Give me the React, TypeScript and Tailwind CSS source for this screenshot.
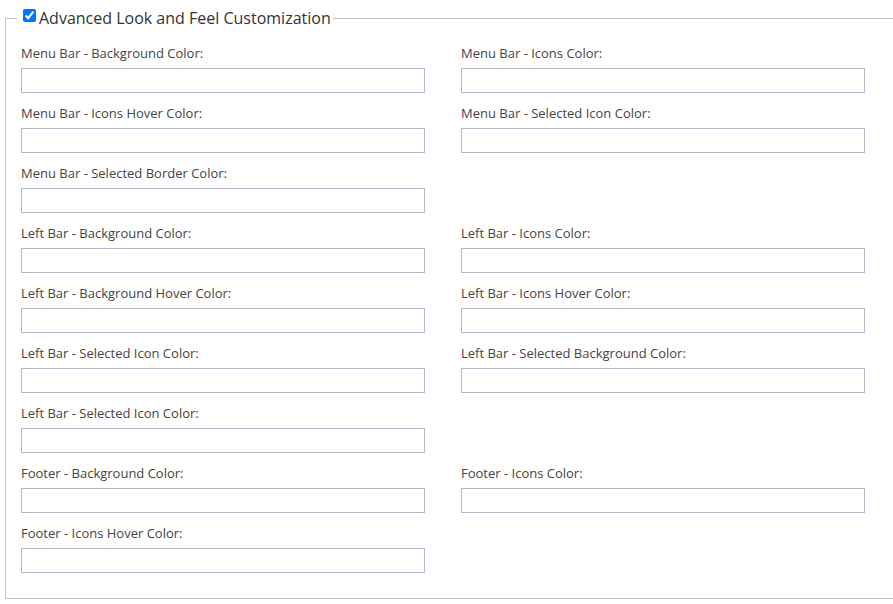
import { useState } from 'react';

const fields: (string | null)[][] = [
  ['Menu Bar - Background Color:', 'Menu Bar - Icons Color:'],
  ['Menu Bar - Icons Hover Color:', 'Menu Bar - Selected Icon Color:'],
  ['Menu Bar - Selected Border Color:', null],
  ['Left Bar - Background Color:', 'Left Bar - Icons Color:'],
  ['Left Bar - Background Hover Color:', 'Left Bar - Icons Hover Color:'],
  ['Left Bar - Selected Icon Color:', 'Left Bar - Selected Background Color:'],
  ['Left Bar - Selected Icon Color:', null],
  ['Footer - Background Color:', 'Footer - Icons Color:'],
  ['Footer - Icons Hover Color:', null],
];

const ColorField = ({ label }: { label: string }) => (
  <div className="flex flex-col">
    <label className="block text-[13px] leading-[18px] text-[#444] mb-[6px]">
      {label}
    </label>
    <input
      type="text"
      className="w-[404px] h-[25px] border border-[#b7b7cb] bg-white outline-none"
    />
  </div>
);

const App = () => {
  const [advanced, setAdvanced] = useState(true);

  return (
    <div className="w-[893px] h-[604px] overflow-hidden bg-white font-['Open_Sans',sans-serif]">
      <fieldset className="ml-[5px] mt-[7px] w-[920px] border border-[#c4c4c4] pl-[15px] pt-[15px] pb-[25px]">
        <legend className="-ml-[4px] px-[2px] flex items-center text-[16px] leading-[22px] text-[#333]">
          <input
            type="checkbox"
            checked={advanced}
            onChange={(e) => setAdvanced(e.target.checked)}
            className="ml-[4px] mr-[3px] w-[13px] h-[13px] -mt-[5px]"
          />
          Advanced Look and Feel Customization
        </legend>
        <div className="flex flex-col gap-[11px]">
          {fields.map((row, i) => (
            <div key={i} className="flex gap-[36px]">
              {row.map((f, j) => (f ? <ColorField key={j} label={f} /> : null))}
            </div>
          ))}
        </div>
      </fieldset>
    </div>
  );
};

export default App;
